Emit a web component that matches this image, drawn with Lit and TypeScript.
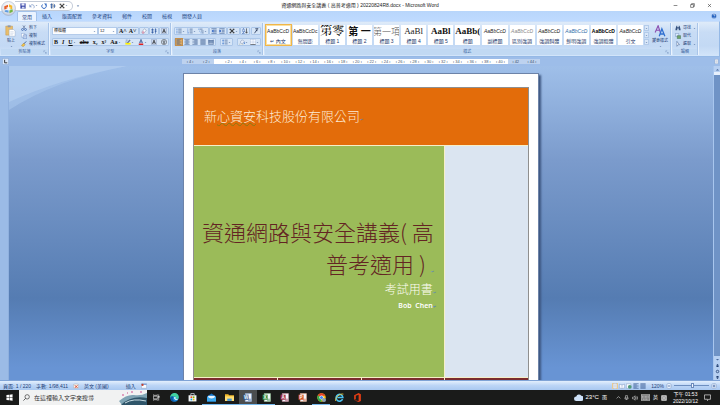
import { LitElement, html, svg, css, nothing } from "lit";
import { customElement } from "lit/decorators.js";
import { classMap } from "lit/directives/class-map.js";

const S = "#2a4d86";
const lines = (rows: number[][]) => rows.map(([x1, x2, y]) => svg`<path d="M${x1} ${y}H${x2}" stroke=${S} stroke-width="1.6"/>`);

const ICONS: Record<string, unknown> = {
  down: svg`<path d="M3 6h10l-5 5z" fill="#4a6a9c"/>`,
  up: svg`<path d="M3 11h10l-5-5z" fill="#4a6a9c"/>`,
  save: svg`<path d="M1 1h14v14H1z" fill="#3c49a8"/><path d="M4 1h8v6H4z" fill="#e8ecfa"/><path d="M5 10h7v5H5z" fill="#cfd6ee"/>`,
  undo: svg`<path d="M4 7c3-4 10-3 10 3 0 2-1 3-2 4" fill="none" stroke="#8fa6cf" stroke-width="2.4"/><path d="M1 3v8h7z" fill="#8fa6cf"/>`,
  redo: svg`<path d="M12 4a6 6 0 1 1-8 0" fill="none" stroke="#2f66c0" stroke-width="2.6"/><path d="M8 1h7v7z" fill="#2f66c0"/>`,
  han: svg`<path d="M1 4h6M4 1v14M1 8h6M2 12h4M9 8h6M12 3v10" stroke="#27549c" stroke-width="1.8" fill="none"/><path d="M8 1v14" stroke="#222" stroke-width="1"/>`,
  cross: svg`<path d="M2 3l5 5-5 5M14 3L9 8l5 5M2 3h4M10 3h4M2 13h4M10 13h4M4 3l8 10M12 3L4 13" stroke="#111" stroke-width="1.7" fill="none"/>`,
  office: svg`<circle cx="16" cy="16" r="15" fill="url(#og)" stroke="#9aa7bd"/><defs><radialGradient id="og" cx=".5" cy=".3" r=".8"><stop offset="0" stop-color="#fff"/><stop offset=".6" stop-color="#dfe4ee"/><stop offset="1" stop-color="#a5b2c9"/></radialGradient></defs><path d="M7 11l8-3v8l-8 2z" fill="#e8602c"/><path d="M17 7l7 3v7h-7z" fill="#f3b92d"/><path d="M8 20l8-2v7l-8-2z" fill="#5a9be0"/><path d="M18 18h7v5l-7 3z" fill="#73b544"/><path d="M12 13h8v7h-8z" fill="#fff" opacity=".75"/>`,
  paste: svg`<path d="M2 3h18v24H2z" fill="#e9bd6b" stroke="#b98b3f"/><path d="M7 1h8v5H7z" fill="#8d97a8"/><path d="M11 12h12l4 4v14H11z" fill="#fff" stroke="#7f95b8"/><path d="M14 18h9M14 22h9M14 26h7" stroke="#9db2d2"/>`,
  cut: svg`<path d="M5 1l5 9M11 1L6 10" stroke="#50648c" stroke-width="1.6"/><circle cx="4" cy="12" r="2.6" fill="none" stroke="#2b58a8" stroke-width="1.8"/><circle cx="12" cy="12" r="2.6" fill="none" stroke="#2b58a8" stroke-width="1.8"/>`,
  copy: svg`<path d="M1 1h9v10H1z" fill="#fff" stroke="#5b7fb8"/><path d="M6 5h9v10H6z" fill="#dce9fb" stroke="#2b58a8"/><path d="M8 8h5M8 11h5" stroke="#5b7fb8"/>`,
  brush: svg`<path d="M14 1L7 8" stroke="#3c5a8c" stroke-width="2.4"/><path d="M7 6l4 4-5 5-5-3z" fill="#f1c24c" stroke="#a77a22"/>`,
  eraser: svg`<path d="M2 11L9 2l5 4-7 9H4z" fill="#fff" stroke="#6c7f9f" stroke-width="1.2"/><path d="M2 11l3-4 5 4-3 4H4z" fill="#d9a0b8"/>`,
  ruby: svg`<path d="M1 4h6M4 1v14M1 8h6M1 12h6M10 5h5M12 1v14M10 9h5" stroke="#1f4a98" stroke-width="1.6"/>`,
  boxA: svg`<path d="M1 1h14v14H1z" fill="#cfdcf0" stroke="#7287ab"/><path d="M4 13L8 3l4 10M5.5 10h5" fill="none" stroke="#111" stroke-width="1.7"/>`,
  circA: svg`<circle cx="8" cy="8" r="7" fill="none" stroke="#333" stroke-width="1.3"/><path d="M4 6h8M8 3v9M5 9h6M5 12h6" stroke="#333" stroke-width="1.2"/>`,
  hilite: svg`<path d="M1 10h14v5H1z" fill="#fff200"/><path d="M5 9l7-8 3 3-7 7z" fill="#6b7c98"/><path d="M1 8h4M2 3h5" stroke="#3c5a8c" stroke-width="1.4"/>`,
  fontcol: svg`<path d="M2 12h12v4H2z" fill="#e02020"/><path d="M4 11L8 1l4 10M5 8h6" fill="none" stroke="#1d3f82" stroke-width="1.8"/>`,
  bullets: svg`${lines([[6, 15, 3], [6, 15, 8], [6, 15, 13]])}<path d="M1 2h3v2H1zM1 7h3v2H1zM1 12h3v2H1z" fill="#2b6ac8"/>`,
  numbers: svg`${lines([[7, 15, 3], [7, 15, 8], [7, 15, 13]])}<path d="M2 1v4M1 7h2v2H1M1 12h3v2H1" fill="none" stroke="#2b6ac8"/>`,
  multi: svg`${lines([[4, 12, 3], [8, 15, 8], [10, 15, 13]])}<path d="M1 2h2v2H1zM4 7h2v2H4zM7 12h2v2H7z" fill="#2b6ac8"/>`,
  outdent: svg`${lines([[1, 15, 2], [8, 15, 6], [8, 15, 10], [1, 15, 14]])}<path d="M7 4v8L1 8z" fill="#1d55b8"/>`,
  indent: svg`${lines([[1, 15, 2], [8, 15, 6], [8, 15, 10], [1, 15, 14]])}<path d="M1 4v8l6-4z" fill="#1d55b8"/>`,
  sort: svg`<path d="M1 7l3-6 3 6M1 9h6l-6 6h6" fill="none" stroke="#2b58a8" stroke-width="1.5"/><path d="M12 1v12M9 10l3 4 3-4" fill="none" stroke="#222" stroke-width="1.6"/>`,
  para: svg`<path d="M12 2L4 14M6 2h8M8 7h4" stroke="#1c2c4c" stroke-width="2"/>`,
  left: lines([[1, 15, 2], [1, 10, 5], [1, 15, 8], [1, 10, 11], [1, 15, 14]]),
  center: lines([[1, 15, 2], [4, 12, 5], [1, 15, 8], [4, 12, 11], [1, 15, 14]]),
  right: lines([[1, 15, 2], [6, 15, 5], [1, 15, 8], [6, 15, 11], [1, 15, 14]]),
  just: lines([[1, 15, 2], [1, 15, 5], [1, 15, 8], [1, 15, 11], [1, 15, 14]]),
  dist: svg`${lines([[1, 15, 4], [1, 15, 7], [1, 15, 10], [1, 15, 14]])}<path d="M2 1v13M14 1v13" stroke=${S}/>`,
  spacing: svg`${lines([[7, 15, 3], [7, 15, 8], [7, 15, 13]])}<path d="M3 2v12M1 5l2-3 2 3M1 11l2 3 2-3" fill="none" stroke="#2b6ac8" stroke-width="1.3"/>`,
  fill: svg`<path d="M3 8l6-6 5 5-6 6z" fill="#e8eefa" stroke="#5a6f94"/><path d="M14 8q3 5 0 5t0-5z" fill="#2b6ac8"/><path d="M1 13h9v3H1z" fill="#fff" stroke="#9aa"/>`,
  border: svg`<path d="M1 1h14v14H1zM8 1v14M1 8h14" fill="#f4f8ff" stroke="#8aa0c6" stroke-dasharray="2 1"/><path d="M1 15h14" stroke="#222" stroke-width="1.6"/>`,
  styles: svg`<path d="M3 20L11 2l6 18M5 14h10" fill="none" stroke="#8b4fb0" stroke-width="3"/><path d="M14 30l7-20 8 20M16 24h11" fill="none" stroke="#2f6fd0" stroke-width="3.4"/>`,
  find: svg`<path d="M2 8l2-6h2v12H1zM14 8l-2-6h-2v12h5zM6 6h4v3H6z" fill="#35517e"/>`,
  replace: svg`<path d="M1 1h9v8H1z" fill="#dceaff" stroke="#4b6da5"/><path d="M6 7h9v8H6z" fill="#6fa568" stroke="#2f5c48"/>`,
  pick: svg`<path d="M5 1v13l3-4 4 0z" fill="#fff" stroke="#3b5a8c" stroke-width="1.3"/>`,
  launch: svg`<path d="M3 9V3h6M7 7l6 6M13 8v5H8" fill="none" stroke="#6584b4" stroke-width="1.5"/>`,
  help: svg`<circle cx="8" cy="8" r="7" fill="#2463c0" stroke="#fff"/><path d="M6 6q0-2 2-2t2 2-2 3M8 11v2" fill="none" stroke="#fff" stroke-width="1.6"/>`,
  min: svg`<path d="M2 8h12" stroke="#333" stroke-width="1.8"/>`,
  max: svg`<path d="M2 5h9v9H2zM5 5V2h9v9h-3" fill="none" stroke="#333" stroke-width="1.8"/>`,
  close: svg`<path d="M3 3l10 10M13 3L3 13" stroke="#333" stroke-width="1.8"/>`,
  tabstop: svg`<path d="M1 1h14v14H1z" fill="#dbe8fa" stroke="#7d9cc9"/><path d="M6 4v7h6" fill="none" stroke="#222" stroke-width="2"/>`,
  proof: svg`<path d="M1 4l7-2 7 2v9l-7 2-7-2z" fill="#f6f2ea" stroke="#8a94a8"/><path d="M5 6l7 7M12 6l-7 7" stroke="#d83a24" stroke-width="2.4"/>`,
  macro: svg`<path d="M1 2h14v12H1z" fill="#f8fbff" stroke="#6f86ad"/><path d="M1 2h14v3H1z" fill="#6f97d6"/><circle cx="4" cy="5" r="3" fill="#c8402c"/>`,
  web: svg`<path d="M1 2h12v12H1z" fill="#f8fbff" stroke="#6f86ad"/><circle cx="10" cy="10" r="5" fill="#4f9a78"/>`,
  page: svg`<path d="M3 1h10v14H3z" fill="#fff" stroke="#7b8fb3"/><path d="M5 5h6M5 8h6M5 11h6" stroke="#7b8fb3"/>`,
  book: svg`<path d="M1 3l7 2 7-2v10l-7 2-7-2zM8 5v10" fill="#f5f8ff" stroke="#6f86ad"/>`,
  minus: svg`<circle cx="8" cy="8" r="7" fill="#e9f2ff" stroke="#5f7fb2"/><path d="M4 8h8" stroke="#3b5f9c" stroke-width="2"/>`,
  plus: svg`<circle cx="8" cy="8" r="7" fill="#e9f2ff" stroke="#5f7fb2"/><path d="M4 8h8M8 4v8" stroke="#3b5f9c" stroke-width="2"/>`,
  dot: svg`<circle cx="8" cy="8" r="4" fill="none" stroke="#1d3c70" stroke-width="2.5"/>`,
  dbl: svg`<path d="M3 3h10l-5 5zM3 8h10l-5 5z" fill="#1d3c70"/>`,
  dblup: svg`<path d="M3 8h10L8 3zM3 13h10L8 8z" fill="#1d3c70"/>`,
  win: svg`<path d="M1 2.5l6-.8v5.8H1zM8 1.5l7-1v7H8zM1 8.5h6v5.8l-6-.8zM8 8.5h7v7l-7-1z" fill="#fff"/>`,
  search: svg`<circle cx="9.5" cy="6.5" r="5" fill="none" stroke="#222" stroke-width="1.4"/><path d="M6 10l-5 5" stroke="#222" stroke-width="1.6"/>`,
  task: svg`<path d="M1 5h9v6H1zM1 1v2h9V1M1 15v-2h9v2M13 1v14" fill="none" stroke="#fff" stroke-width="1.3"/><path d="M12 5h3v3h-3z" fill="#fff"/>`,
  edge: svg`<circle cx="8" cy="8" r="7.5" fill="#1c86d8"/><path d="M.5 8a7.5 7.5 0 0 1 15-1c.3 3-2 4-5 4 1-1 1-5-2.5-5S1 7 .5 8z" fill="#42d3a0"/><path d="M6 7c-3 3 0 8 4 8-6 2-10-3-9-7 1-3 5-3 5-1z" fill="#0c59a4"/><path d="M7 8c1-2 4-1 3 1s2 3 5 1c-2 4-8 3-8-2z" fill="#e9fbff"/>`,
  store: svg`<path d="M1 4h14v11H1z" fill="#f4f7fa"/><path d="M5 4V1h6v3" fill="none" stroke="#d7e0e8" stroke-width="1.3"/><path d="M4.5 6H7.5v3h-3z" fill="#f25022"/><path d="M8.5 6h3v3h-3z" fill="#7fba00"/><path d="M4.5 10H7.5v3h-3z" fill="#00a4ef"/><path d="M8.5 10h3v3h-3z" fill="#ffb900"/>`,
  mail: svg`<path d="M0 6l8-5 8 5v9H0z" fill="#1173c8"/><path d="M2 5h12v5H2z" fill="#e9f5ff"/><path d="M0 6l8 5 8-5v9H0z" fill="#3aa9f0"/>`,
  folder: svg`<path d="M0 2h6l1 2h9v10H0z" fill="#f2b92c"/><path d="M0 6h16v8H0z" fill="#ffdd74"/><path d="M4 10h8v4H4z" fill="#3f93d8"/>`,
  cloud: svg`<path d="M4 14a4 4 0 0 1 0-8 5 5 0 0 1 9-1 4.5 4.5 0 0 1 0 9z" fill="#cfe2f8"/>`,
  chrome: svg`<circle cx="8" cy="8" r="7.5" fill="#fbc116"/><path d="M8 8L1.5 4.3A7.5 7.5 0 0 1 15 5H8z" fill="#e33b2e"/><path d="M8 8L1.5 4.3A7.5 7.5 0 0 0 8 15.5z" fill="#2da94f"/><circle cx="8" cy="8" r="3.7" fill="#fff"/><circle cx="8" cy="8" r="2.7" fill="#4285f4"/><circle cx="12.5" cy="12.5" r="3.5" fill="#8aa0b8"/>`,
  ie: svg`<path d="M13.5 11A6 6 0 1 1 14 8H4" fill="none" stroke="#4cc3f2" stroke-width="2.8"/><path d="M1 14C-1 9 9 0 15 2" fill="none" stroke="#f7cf3c" stroke-width="1.5"/>`,
  o365: svg`<path d="M2 4l8-4 4 2v12l-4 2-8-3 8 1V3L5 5v6l-3 1z" fill="#e43d14"/>`,
  chev: svg`<path d="M2 11l6-6 6 6" fill="none" stroke="#fff" stroke-width="1.6"/>`,
  mic: svg`<path d="M5 2h6v8H5zM3 8v5h10V8M8 13v3" fill="none" stroke="#fff" stroke-width="1.5"/>`,
  sound: svg`<path d="M1 6h3l4-4v12l-4-4H1z" fill="none" stroke="#fff" stroke-width="1.3"/><path d="M10 5q2 3 0 6M13 3q4 5 0 10" fill="none" stroke="#fff" stroke-width="1.3"/>`,
  kbd: svg`<path d="M0 3h16v10H0z" fill="#777" stroke="#eee"/><path d="M2 6h12M2 8.5h12M4 11h8" stroke="#eee" stroke-dasharray="1.5 1"/>`,
  ime: svg`<path d="M1 1h14v14H1z" fill="#fff"/><path d="M4 4h8v8H4zM8 4v8M4 8h8" fill="none" stroke="#333"/>`,
  note: svg`<path d="M1 2h14v10h-4l-3 3v-3H1z" fill="none" stroke="#fff" stroke-width="1.4"/>`,
};

const BIG = new Set(["office", "paste", "styles"]);
const icon = (n: string, cls = "i6") =>
  html`<svg class=${cls} viewBox=${BIG.has(n) ? "0 0 32 32" : "0 0 16 16"} aria-hidden="true">${ICONS[n]}</svg>`;

const appTile = (letter: string, dark: string, light: string) => html`
  <svg class="i9" viewBox="0 0 16 16" aria-hidden="true">
    <path d="M4 1h11v14H4z" fill="#f3f6fb" stroke=${light} />
    <path d="M1 3h9v9H1z" fill=${dark} />
    <path d="M9 11h5M9 13h5" stroke=${dark} />
    <text x="5.5" y="11" font-size="8" font-weight="700" text-anchor="middle" fill="#fff">${letter}</text>
  </svg>`;

@customElement("word-ribbon")
class WordRibbon extends LitElement {
  static styles = css`
    :host { display: block; font: 4px/6px "Liberation Sans", "Noto Sans CJK TC", sans-serif; color: #1f3f77; }
    button, select { all: unset; box-sizing: border-box; cursor: default; white-space: nowrap; }
    button { display: flex; align-items: center; justify-content: center; }
    svg { display: block; flex: none; }
    .i3 { width: 3px; height: 3px; } .i4 { width: 4px; height: 4px; } .i5 { width: 5px; height: 5px; }
    .i6 { width: 6px; height: 6px; } .i7 { width: 7px; height: 7px; } .i12 { width: 12px; height: 12px; }
    .title { position: relative; display: grid; grid-template-columns: 1fr auto 1fr; align-items: center; height: 11px; background: #fff; color: #222; font-size: 5px; line-height: 11px; }
    .office { position: absolute; left: 1px; top: 1px; width: 15px; height: 15px; z-index: 2; }
    .office svg { width: 15px; height: 15px; }
    .tools { display: flex; align-items: center; gap: 3px; justify-self: start; margin-left: 15px; }
    .quick { display: flex; align-items: center; gap: 3px; padding: 0 4px 0 5px; height: 8px; border: 1px solid #c3cbd8; border-left: 0; border-radius: 0 5px 5px 0; }
    .wins { justify-self: end; display: flex; gap: 12px; padding-right: 8px; }
    .tabs { display: flex; height: 10px; padding-left: 17px; padding-right: 3px; background: linear-gradient(#b8d6fb, #bfdbff); align-items: stretch; }
    .tabs button { padding: 0 5px; color: #1c3f80; font-size: 5px; }
    .tabs .on { background: #eaf3ff; border: 1px solid #a3c2ea; border-bottom: 0; border-radius: 2px 2px 0 0; padding: 0 4px; }
    .tabs .help { margin-left: auto; padding: 0; align-self: center; }
    .ribbon { display: flex; gap: 2px; height: 36px; box-sizing: border-box; padding: 1px; background: linear-gradient(#dfebf9, #c8dcf5 30%, #c3d9f4 70%, #d3e5fa); border: 1px solid #95b9e6; border-top-color: #c9defa; border-left: 0; }
    .group { box-sizing: border-box; display: flex; flex-direction: column; border-right: 1px solid #a9c5e9; box-shadow: 1px 0 #eaf3fd; }
    .body { flex: 1; display: flex; min-height: 0; }
    .cap { position: relative; height: 6px; background: #c1d9f3; text-align: center; color: #3f659f; }
    .cap svg { position: absolute; right: 1px; top: 1px; }
    .clip { flex: 0 0 48px; } .font { flex: 0 0 118px; } .par { flex: 0 0 90px; } .sty { flex: 1; min-width: 0; } .edit { flex: 0 0 25px; }
    .end { flex: 0 0 18px; }
    .paste { flex-direction: column; width: 20px; gap: 1px; }
    .stack { display: flex; flex-direction: column; justify-content: space-evenly; align-items: flex-start; }
    .stack button { gap: 2px; }
    .rows { flex-direction: column; justify-content: space-evenly; padding: 1px 1px 0; }
    .row { display: flex; align-items: center; justify-content: space-between; }
    .field { display: flex; align-items: center; height: 8px; background: #fbfdff; border: 1px solid #b3cbea; box-sizing: border-box; padding: 0 1px; }
    .field select { flex: 1; font-size: 4px; color: #111; min-width: 0; line-height: 6px; height: 6px; }
    .fname { width: 46px; } .fsize { width: 19px; }
    .seg { display: flex; align-items: center; gap: 2px; height: 8px; padding: 0 1px; background: #d6e5f7; border: 1px solid #abc6e8; border-radius: 1px; box-sizing: border-box; }
    .row .t { font: 700 6px/6px "Liberation Serif", serif; color: #111; }
    .row .it { font-style: italic; } .un { text-decoration: underline; } .st { text-decoration: line-through; }
    .on-btn { background: #f7b860; outline: 1px solid #c48f4c; }
    .gallery { flex: 1; min-width: 0; display: flex; align-self: center; gap: 2px; height: 20px; margin: 0 0 2px 1px; }
    .cell { flex: 1 1 0; min-width: 0; overflow: hidden; flex-direction: column; background: #fff; justify-content: flex-end; gap: 2px; font-size: 5px; padding-bottom: 1px; color: #222; }
    .cell .lab { color: #22366a; line-height: 6px; font-size: 5px; }
    .cell .smp { line-height: 9px; height: 9px; display: flex; align-items: center; }
    .cur { outline: 1px solid #f0b64a; box-shadow: inset 0 0 0 1px #fbe0a0; }
    .s-serif .smp { font: 9px/9px "Liberation Serif", "Noto Serif CJK TC", serif; }
    .s-big .smp { font: 500 12px/9px "Liberation Serif", "Noto Serif CJK TC", "Noto Sans CJK TC", serif; color: #111; }
    .s-med .smp { font: 700 10px/9px "Liberation Serif", "Noto Sans CJK TC", serif; color: #111; }
    .s-thin .smp { font: 300 9px/9px "Noto Sans CJK TC", sans-serif; color: #555; }
    .s-bserif .smp { font: 700 9px/9px "Liberation Serif", serif; color: #111; }
    .s-ital .smp { font-style: italic; }
    .s-gray .smp { font-style: italic; color: #888; }
    .s-blue .smp { font-style: italic; color: #2e6ca8; }
    .s-bold .smp { font-weight: 700; color: #000; }
    .scroll { width: 5px; margin: 0 1px 2px 1px; align-self: center; height: 20px; display: flex; flex-direction: column; gap: 1px; }
    .scroll button { flex: 1; background: #d9e7f8; border: 1px solid #b3cbea; }
    .change { flex-direction: column; width: 20px; gap: 1px; justify-content: center; }
    .change span { font-size: 4px; }
    .edit .stack { padding-left: 2px; }
  `;

  private btn(n: string, label: string, drop = false, cls = "") {
    return html`<button class=${cls} aria-label=${label}>${icon(n)}${drop ? icon("down", "i3") : nothing}</button>`;
  }
  private txt(t: string, label: string, cls = "", drop = false) {
    return html`<button aria-label=${label}><span class="t ${cls}">${t}</span>${drop ? icon("down", "i3") : nothing}</button>`;
  }

  render() {
    const tabs = ["常用", "插入", "版面配置", "參考資料", "郵件", "校閱", "檢視", "開發人員"];
    const cells = [
      ["AaBbCcD", "↵ 內文", "cur"], ["AaBbCcDc", "無間距", ""], ["第零", "標題 1", "s-big"], ["第 一", "標題 2", "s-med"],
      ["第一項", "標題 3", "s-thin"], ["AaBl", "標題 4", "s-serif"], ["AaBl", "標題 5", "s-bserif"], ["AaBb(", "標題", "s-bserif"],
      ["AaBbCcD", "副標題", "s-ital"], ["AaBbCcD", "區別強調", "s-gray"], ["AaBbCcD", "強調斜體", "s-ital"], ["AaBbCcD", "鮮明強調", "s-blue"],
      ["AaBbCcD", "強調粗體", "s-bold"], ["AaBbCcD", "引文", "s-ital"],
    ];
    return html`
      <header class="title">
        <button class="office" aria-label="Office">${icon("office")}</button>
        <div class="tools">
          <div class="quick">
            ${this.btn("save", "儲存")}${this.btn("undo", "復原", true)}${this.btn("redo", "重做")}${this.btn("han", "繁簡轉換")}${this.btn("cross", "字元比例", true)}
          </div>
          <button aria-label="自訂快速存取工具列">${icon("down", "i4")}</button>
        </div>
        <span>資通網路與安全講義 ( 高普考適用 ) 20220824R8.docx - Microsoft Word</span>
        <div class="wins">
          <button aria-label="最小化">${icon("min", "i5")}</button><button aria-label="還原">${icon("max", "i5")}</button><button aria-label="關閉">${icon("close", "i5")}</button>
        </div>
      </header>
      <nav class="tabs">
        ${tabs.map((t, i) => html`<button class=${classMap({ on: i === 0 })}>${t}</button>`)}
        <button class="help" aria-label="說明">${icon("help")}</button>
      </nav>
      <div class="ribbon">
        <section class="group clip">
          <div class="body">
            <button class="paste">${icon("paste", "i12")}<span>貼上</span>${icon("down", "i3")}</button>
            <div class="stack">
              <button>${icon("cut")}剪下</button><button>${icon("copy")}複製</button><button>${icon("brush")}複製格式</button>
            </div>
          </div>
          <div class="cap">剪貼簿${icon("launch", "i4")}</div>
        </section>
        <section class="group font">
          <div class="body rows">
            <div class="row">
              <label class="field fname"><select aria-label="字型"><option>標楷體</option></select>${icon("down", "i3")}</label>
              <label class="field fsize"><select aria-label="字型大小"><option>12</option></select>${icon("down", "i3")}</label>
              <div class="seg">${this.txt("A˄", "放大字型")}${this.txt("A˅", "縮小字型")}</div>
              <div class="seg">${this.btn("eraser", "清除格式設定")}</div>
              <div class="seg">${this.btn("ruby", "注音標示")}</div>
              <div class="seg">${this.btn("boxA", "字元框線")}</div>
            </div>
            <div class="row seg">
              ${this.txt("B", "粗體")}${this.txt("I", "斜體", "it")}${this.txt("U", "底線", "un", true)}${this.txt("abc", "刪除線", "st")}${this.txt("x₂", "下標")}${this.txt("x²", "上標")}${this.txt("Aa", "大小寫", "", true)}${this.btn("hilite", "醒目提示", true)}${this.btn("fontcol", "字型色彩", true)}${this.btn("boxA", "字元網底")}${this.btn("circA", "圍繞字元")}
            </div>
          </div>
          <div class="cap">字型${icon("launch", "i4")}</div>
        </section>
        <section class="group par">
          <div class="body rows">
            <div class="row">
              <div class="seg">${this.btn("bullets", "項目符號", true)}${this.btn("numbers", "編號", true)}${this.btn("multi", "多層次清單", true)}</div>
              <div class="seg">${this.btn("outdent", "減少縮排")}${this.btn("indent", "增加縮排")}</div>
              <div class="seg">${this.btn("cross", "亞洲方式配置", true)}</div>
              <div class="seg">${this.btn("sort", "排序")}</div>
              <div class="seg">${this.btn("para", "顯示編輯標記")}</div>
            </div>
            <div class="row">
              <div class="seg">${this.btn("left", "靠左", false, "on-btn")}${this.btn("center", "置中")}${this.btn("right", "靠右")}${this.btn("just", "左右對齊")}${this.btn("dist", "分散對齊")}</div>
              <div class="seg">${this.btn("spacing", "行距", true)}</div>
              <div class="seg">${this.btn("fill", "網底", true)}${this.btn("border", "框線", true)}</div>
            </div>
          </div>
          <div class="cap">段落${icon("launch", "i4")}</div>
        </section>
        <section class="group sty">
          <div class="body">
            <div class="gallery">
              ${cells.map(([s, l, c]) => html`<button class="cell ${c}"><span class="smp">${s}</span><span class="lab">${l}</span></button>`)}
            </div>
            <div class="scroll">
              <button aria-label="上一列">${icon("up", "i3")}</button><button aria-label="下一列">${icon("down", "i3")}</button><button aria-label="其他">${icon("down", "i3")}</button>
            </div>
            <button class="change">${icon("styles", "i12")}<span>變更樣式</span>${icon("down", "i3")}</button>
          </div>
          <div class="cap">樣式${icon("launch", "i4")}</div>
        </section>
        <section class="group edit">
          <div class="body">
            <div class="stack">
              <button>${icon("find")}尋找${icon("down", "i3")}</button><button>${icon("replace")}取代</button><button>${icon("pick")}選取${icon("down", "i3")}</button>
            </div>
          </div>
          <div class="cap">編輯</div>
        </section>
        <div class="end"></div>
      </div>`;
  }
}

@customElement("word-canvas")
class WordCanvas extends LitElement {
  static styles = css`
    :host { display: flex; flex-direction: column; min-height: 0; font-family: "Liberation Sans", "Noto Sans CJK TC", sans-serif; }
    button { all: unset; display: flex; justify-content: center; align-items: center; }
    svg { display: block; }
    .i5 { width: 5px; height: 5px; } .i6 { width: 6px; height: 6px; } .i7 { width: 7px; height: 7px; }
    .rule { display: flex; align-items: center; height: 9px; background: #9dbde9; padding: 0 1px 0 2px; }
    .rule .mid { flex: 1; display: flex; justify-content: center; }
    .scale { display: flex; flex: 0 1 358px; height: 5px; font-size: 4px; line-height: 5px; color: #44546c; padding-right: 1px; }
    .scale div { display: flex; }
    .scale span { flex: 1; text-align: center; white-space: nowrap; }
    .out { background: #bdd2ef; flex: 33; } .in { background: #fff; flex: 292; padding-left: 7px; }
    .area { flex: 1; min-height: 0; display: flex; }
    .vrule { width: 8px; background: #9bbbe6; border-right: 1px solid #8fb0de; }
    .view { position: relative; flex: 1; min-width: 0; display: flex; justify-content: center; overflow: hidden; padding-top: 7px; background: linear-gradient(#9fbfe9, #7b9bcc 30%, #557cb2 74%, #6894d4 96%); }
    .swoosh { position: absolute; inset: 0; width: 100%; height: 100%; }
    .paper { position: relative; flex: 0 1 356px; box-sizing: border-box; background: #fff; border: 1px solid #6d83a8; border-bottom: 0; box-shadow: 2px 2px 2px #3c5680; padding: 13px 9px 0; display: flex; }
    .cover { flex: 1; display: grid; grid-template: 57px 1fr 2px / 3fr 1fr; gap: 1px; background: #f6efc8; border: 1px solid #8f8f8f; border-bottom: 0; }
    .band { grid-column: 1 / 3; background: #e36c0a; display: flex; align-items: center; padding-left: 10px; }
    .org { margin: 0; font-size: 13px; font-weight: 300; line-height: 18px; color: #fdebd6; }
    .wavy { text-decoration: underline wavy #8a7a10 1px; text-underline-offset: 1px; }
    .main { background: #9bbb59; text-align: right; padding: 69px 8px 0 0; }
    h1 { margin: 0 2px 0 0; font: 300 22px/32px "Noto Sans CJK TC", sans-serif; color: #632423; white-space: nowrap; }
    .sub { font-size: 12px; line-height: 22px; color: #fdfdf2; margin: 0; font-weight: 300; }
    .who { font: 600 7px/10px "Noto Sans", sans-serif; color: #fff; margin: 0; white-space: pre; }
    .side { background: #dbe5f1; }
    .foot { grid-column: 1 / 3; display: grid; grid-template-columns: repeat(4, 1fr); gap: 1px; }
    .foot i { background: #7b2c2e; }
    .mark { font-size: 4px; line-height: 0; color: #5c86c0; }
    .bar { width: 6px; display: flex; flex-direction: column; background: #6f93c6; border-left: 1px solid #a8c6ee; }
    .bar button { height: 6px; background: #b7d0f2; }
    .thumb { height: 3px; background: #e7f0fc; }
    .track { flex: 1; }
  `;
  render() {
    const ticks = Array.from({ length: 20 }, (_, i) => (i + 1) * 2);
    return html`
      <div class="rule">
        ${icon("tabstop", "i7")}
        <div class="mid"><div class="scale">
          <div class="out"><span>ı 4 ı</span><span>ı 2 ı</span></div>
          <div class="in">${ticks.map((t) => html`<span>ı ${t} ı</span>`)}</div>
          <div class="out"><span>ı 42</span><span>ı 44 ı</span></div>
        </div></div>
        ${icon("page", "i5")}
      </div>
      <div class="area">
        <div class="vrule"></div>
        <div class="view">
          <svg class="swoosh" viewBox="0 0 704 314" preserveAspectRatio="none" aria-hidden="true">
            <path d="M0 44Q46 14 118 0H0z" fill="#a9c6ed" opacity=".6" />
            <path d="M0 36Q50 13 118 0H0z" fill="#b2cdf0" opacity=".7" />
          </svg>
          <article class="paper">
            <div class="cover">
              <div class="band"><p class="org">新<span class="wavy">心資安</span>科技股份有限公司<span class="mark">↵</span></p></div>
              <div class="main">
                <h1>資通網路與安全講義( 高<br />普考適用 ) <span class="mark">↵</span></h1>
                <p class="sub">考試用書<span class="mark">↵</span></p>
                <p class="who">Bob  Chen<span class="mark">↵</span></p>
              </div>
              <div class="side"></div>
              <div class="foot"><i></i><i></i><i></i><i></i></div>
            </div>
          </article>
        </div>
        <div class="bar">
          <button aria-label="向上捲動">${icon("up", "i5")}</button><div class="thumb"></div><div class="track"></div>
          <button aria-label="向下捲動">${icon("down", "i5")}</button><button aria-label="上一頁">${icon("dblup", "i5")}</button><button aria-label="瀏覽物件">${icon("dot", "i5")}</button><button aria-label="下一頁">${icon("dbl", "i5")}</button>
        </div>
      </div>`;
  }
}

@customElement("word-status")
class WordStatus extends LitElement {
  static styles = css`
    :host { display: flex; align-items: center; gap: 5px; height: 10px; box-sizing: border-box; padding: 0 3px; font: 5px/8px "Liberation Sans", "Noto Sans CJK TC", sans-serif; color: #1f3f77; background: linear-gradient(#e3effd, #bcd5f6 50%, #a9c8f0); border-top: 1px solid #7fa3d6; }
    button { all: unset; display: flex; align-items: center; }
    svg { display: block; }
    .i6 { width: 6px; height: 6px; } .i7 { width: 7px; height: 7px; }
    .lang { margin-right: 12px; }
    .push { margin-left: auto; }
    .views { display: flex; gap: 1px; } .views .on { background: #fbd58c; }
    .zoom { display: flex; align-items: center; gap: 2px; }
    input { appearance: none; width: 35px; height: 5px; margin: 0; background: linear-gradient(#0000 2px, #6e8fc0 2px 3px, #0000 3px); }
    input::-webkit-slider-thumb { appearance: none; width: 3px; height: 5px; background: #f2f7ff; border: 1px solid #6d8bbb; box-sizing: border-box; }
  `;
  render() {
    return html`
      <span>頁面: 1 / 220</span><span>字數: 1/98,411</span>${icon("proof")}<span class="lang">英文 (美國)</span><span>插入</span>${icon("macro")}
      <div class="views push">
        ${["page", "book", "web", "left", "just"].map((n, i) => html`<button class=${classMap({ on: i === 0 })} aria-label="檢視模式 ${i + 1}">${icon(n)}</button>`)}
      </div>
      <div class="zoom">
        <span>120%</span><button aria-label="縮小">${icon("minus")}</button><input type="range" aria-label="縮放" min="0" max="100" value="52" /><button aria-label="放大">${icon("plus")}</button>
      </div>`;
  }
}

@customElement("task-bar")
class TaskBar extends LitElement {
  static styles = css`
    :host { display: flex; align-items: stretch; height: 15px; background: #1a1b1a; color: #fff; font: 5px/7px "Liberation Sans", "Noto Sans CJK TC", sans-serif; }
    button { all: unset; display: flex; align-items: center; justify-content: center; }
    svg { display: block; flex: none; }
    .i5 { width: 5px; height: 5px; } .i6 { width: 6px; height: 6px; } .i7 { width: 7px; height: 7px; } .i9 { width: 9px; height: 9px; }
    svg text { font-family: "Liberation Sans", sans-serif; }
    .start { width: 19px; }
    .find { display: flex; align-items: center; width: 128px; background: #f1f2f2; gap: 4px; padding-left: 4px; box-sizing: border-box; }
    input { all: unset; flex: 1; min-width: 0; font: 6px/13px "Noto Sans CJK TC", sans-serif; color: #333; }
    input::placeholder { color: #333; }
    .art { width: 28px; height: 15px; }
    .apps { display: flex; flex: 0 1 220px; }
    .apps button { flex: 1; box-sizing: border-box; border-bottom: 1px solid transparent; }
    .apps .run { border-bottom-color: #76b9ed; }
    .apps .act { background: #4b4d4e; }
    .tray { margin-left: auto; display: flex; align-items: center; gap: 3px; padding-right: 9px; }
    .tray .deg { font-size: 6px; } .tray .gap { margin-left: 6px; }
    .clock { font-size: 5px; text-align: center; margin: 0 3px; }
  `;
  render() {
    const apps: [unknown, string, string][] = [
      [icon("task", "i7"), "工作檢視", ""], [icon("edge", "i9"), "Edge", ""], [icon("store", "i9"), "Store", ""], [icon("mail", "i9"), "郵件", "run"],
      [icon("folder", "i9"), "檔案總管", "run"], [appTile("W", "#2b579a", "#8fb0e0"), "Word", "run act"], [appTile("X", "#2f8a45", "#9ccf9f"), "Excel", "run"],
      [appTile("A", "#a03050", "#d89aac"), "Access", ""], [appTile("P", "#d2572c", "#f0b090"), "PowerPoint", ""], [icon("chrome", "i9"), "Chrome", "run"],
      [icon("ie", "i9"), "Internet Explorer", ""], [icon("o365", "i9"), "Office", ""],
    ];
    return html`
      <button class="start" aria-label="開始">${icon("win", "i7")}</button>
      <label class="find">${icon("search", "i7")}<input type="search" placeholder="在這裡輸入文字來搜尋" aria-label="搜尋" />
        <svg class="art" viewBox="0 0 28 15" aria-hidden="true">
          <path d="M0 11Q8 4 15 5T28 3V15H3z" fill="#7fa4b4" /><path d="M2 15Q12 5 28 8V15z" fill="#2f5569" /><path d="M6 13Q14 8 27 11" stroke="#c7dbe2" fill="none" />
          <path d="M3 5h2M12 2h2M21 2h2M8 3h1" stroke="#d985b0" stroke-width="1.4" />
        </svg>
      </label>
      <div class="apps">${apps.map(([i, l, c]) => html`<button class=${c} aria-label=${l}>${i}</button>`)}</div>
      <div class="tray">
        ${icon("cloud", "i9")}<span class="deg">23°C</span><span>雨</span>
        <button class="gap" aria-label="顯示隱藏的圖示">${icon("chev", "i5")}</button>${icon("mic", "i5")}${icon("sound", "i6")}${icon("kbd", "i9")}<span>英</span>${icon("ime", "i6")}
        <span class="clock">下午 01:53<br />2022/10/12</span>
        <button aria-label="通知">${icon("note", "i7")}</button>
      </div>`;
  }
}

@customElement("app-root")
class AppRoot extends LitElement {
  static styles = css`
    :host { display: flex; flex-direction: column; height: 100vh; overflow: hidden; }
    word-canvas { flex: 1; }
    word-ribbon, word-status, task-bar { flex: none; }
  `;
  render() {
    return html`<word-ribbon></word-ribbon><word-canvas></word-canvas><word-status></word-status><task-bar></task-bar>`;
  }
}
